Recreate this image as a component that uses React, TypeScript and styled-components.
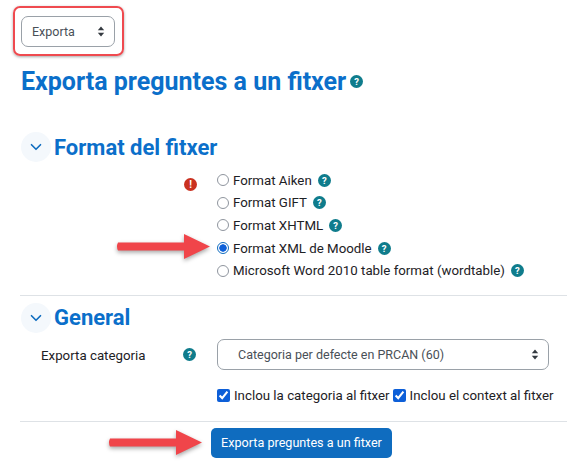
import styled, { createGlobalStyle } from "styled-components";
import { ChevronDown } from "lucide-react";

const GlobalStyle = createGlobalStyle`
  html, body {
    margin: 0;
    background: #fff;
  }
  body {
    font-family: Roboto, "Liberation Sans", sans-serif;
    color: #1d2125;
  }
`;

const Page = styled.div`
  position: relative;
  width: 567px;
  height: 474px;
  overflow: hidden;
  padding: 6px 0 0 13px;
  box-sizing: border-box;
`;

const Highlight = styled.div`
  width: 111px;
  height: 50px;
  box-sizing: border-box;
  padding: 8px 0 0 6px;
  border: 2px solid #ef4a4f;
  border-radius: 7px;
  box-shadow: 0 1px 3px rgba(0, 0, 0, 0.35);
`;

const SelectBox = styled.div<{ $width: number; $indent: number }>`
  width: ${(p) => p.$width}px;
  height: 31px;
  box-sizing: border-box;
  padding: 0 9px 0 ${(p) => p.$indent}px;
  display: flex;
  align-items: center;
  justify-content: space-between;
  border: 1px solid #9aa1a8;
  border-radius: 7px;
  background: #fff;
  color: #495057;
  font-size: 12.5px;
`;

const Heading = styled.h2`
  display: flex;
  align-items: center;
  gap: 4px;
  margin: 7px 0 0 8px;
  height: 36px;
  font-size: 25px;
  font-weight: 700;
  color: #0b6fca;
  white-space: nowrap;
`;

const Section = styled.section`
  margin-left: 8px;
`;

const SectionHead = styled.div<{ $top: number }>`
  display: flex;
  align-items: center;
  gap: 3px;
  margin-top: ${(p) => p.$top}px;
  height: 30px;
`;

const Toggle = styled.span`
  width: 30px;
  height: 30px;
  border-radius: 50%;
  background: #f4f8fc;
  color: #0f6cbf;
  display: flex;
  align-items: center;
  justify-content: center;
`;

const SectionTitle = styled.h3`
  margin: 0;
  font-size: 22px;
  font-weight: 700;
  color: #0b6fca;
`;

const FormatRow = styled.div`
  display: flex;
  margin-top: 7px;
`;

const ErrorIcon = styled.span`
  width: 13px;
  height: 13px;
  margin: 9px 0 0 163px;
  border-radius: 50%;
  background: #ca3120;
  color: #fff;
  font-size: 10px;
  font-weight: 700;
  line-height: 13px;
  text-align: center;
  flex: none;
`;

const Options = styled.div`
  margin-left: 20px;
  display: flex;
  flex-direction: column;
`;

const OptionRow = styled.label`
  display: flex;
  align-items: center;
  height: 22.6px;
  font-size: 13.3px;
  white-space: nowrap;
`;

const Radio = styled.input.attrs({ type: "radio" })`
  appearance: none;
  width: 12px;
  height: 12px;
  margin: 0 4px 0 0;
  box-sizing: border-box;
  border: 1px solid #8f959e;
  border-radius: 50%;
  background: #fff;

  &:checked {
    border-color: #0f6cbf;
    background: radial-gradient(circle, #0d5fd8 0 3.4px, #fff 4px);
  }
`;

const Help = styled.span<{ $gap: number }>`
  width: 13px;
  height: 13px;
  margin-left: ${(p) => p.$gap}px;
  border-radius: 50%;
  background: #0f7c8c;
  color: #fff;
  font-size: 9.5px;
  font-weight: 700;
  line-height: 13px;
  text-align: center;
  flex: none;
`;

const Divider = styled.hr<{ $top: number }>`
  margin: ${(p) => p.$top}px 0 0 7px;
  border: 0;
  border-top: 1px solid #dee2e6;
`;

const CategoryRow = styled.div`
  display: flex;
  align-items: center;
  margin-top: 6px;
  height: 31px;
`;

const CategoryLabel = styled.span`
  width: 142px;
  margin-left: 20px;
  padding-top: 2px;
  font-size: 13.3px;
`;

const CategoryField = styled.div`
  margin-left: 21px;
`;

const Checks = styled.div`
  display: flex;
  align-items: center;
  margin: 16px 0 0 196px;
  height: 20px;
  font-size: 13.3px;
  white-space: nowrap;
`;

const CheckItem = styled.label`
  display: flex;
  align-items: center;
  margin-right: 3px;
`;

const Check = styled.input.attrs({ type: "checkbox" })`
  width: 13px;
  height: 13px;
  margin: 0 4px 0 0;
  accent-color: #0d5fd8;
`;

const Submit = styled.button`
  display: block;
  width: 181px;
  height: 30px;
  margin: 6px 0 0 198px;
  padding: 0;
  border: 0;
  border-radius: 5px;
  background: #0f6cbf;
  color: #fff;
  font-family: inherit;
  font-size: 12.6px;
`;

const Arrow = styled.svg<{ $left: number; $top: number }>`
  position: absolute;
  left: ${(p) => p.$left}px;
  top: ${(p) => p.$top}px;
  overflow: visible;
  filter: drop-shadow(0 2px 2px rgba(0, 0, 0, 0.35));
`;

const SortIcon = () => (
  <svg width="8" height="11" viewBox="0 0 8 11" fill="#343a40">
    <path d="M4 0.5 7.2 4.3H0.8Z" />
    <path d="M4 10.5 0.8 6.7H7.2Z" />
  </svg>
);

const RedArrow = ({ left, top }: { left: number; top: number }) => (
  <Arrow $left={left} $top={top} width="94" height="25" viewBox="0 0 94 25">
    <path
      d="M2 8.5H68V0L94 12.5 68 25V16.5H2Q0 12.5 2 8.5Z"
      fill="#f0454a"
    />
  </Arrow>
);

const formats = [
  { label: "Format Aiken", gap: 6 },
  { label: "Format GIFT", gap: 6 },
  { label: "Format XHTML", gap: 6 },
  { label: "Format XML de Moodle", gap: 6, checked: true },
  { label: "Microsoft Word 2010 table format (wordtable)", gap: 6 },
];

export default function App() {
  return (
    <Page>
      <GlobalStyle />
      <Highlight>
        <SelectBox $width={94} $indent={10}>
          Exporta
          <SortIcon />
        </SelectBox>
      </Highlight>
      <Heading>
        Exporta preguntes a un fitxer
        <Help $gap={0}>?</Help>
      </Heading>

      <Section>
        <SectionHead $top={33}>
          <Toggle>
            <ChevronDown size={18} strokeWidth={2.2} />
          </Toggle>
          <SectionTitle>Format del fitxer</SectionTitle>
        </SectionHead>
        <FormatRow>
          <ErrorIcon>!</ErrorIcon>
          <Options>
            {formats.map((f) => (
              <OptionRow key={f.label}>
                <Radio name="format" defaultChecked={f.checked} />
                {f.label}
                <Help $gap={f.gap}>?</Help>
              </OptionRow>
            ))}
          </Options>
        </FormatRow>
      </Section>

      <Divider $top={13} />

      <Section>
        <SectionHead $top={7}>
          <Toggle>
            <ChevronDown size={18} strokeWidth={2.2} />
          </Toggle>
          <SectionTitle>General</SectionTitle>
        </SectionHead>
        <CategoryRow>
          <CategoryLabel>Exporta categoria</CategoryLabel>
          <Help $gap={0}>?</Help>
          <CategoryField>
            <SelectBox $width={332} $indent={20}>
              Categoria per defecte en PRCAN (60)
              <SortIcon />
            </SelectBox>
          </CategoryField>
        </CategoryRow>
        <Checks>
          <CheckItem>
            <Check defaultChecked />
            Inclou la categoria al fitxer
          </CheckItem>
          <CheckItem>
            <Check defaultChecked />
            Inclou el context al fitxer
          </CheckItem>
        </Checks>
      </Section>

      <Divider $top={15} />
      <Submit>Exporta preguntes a un fitxer</Submit>

      <RedArrow left={116} top={234} />
      <RedArrow left={108} top={430} />
    </Page>
  );
}
